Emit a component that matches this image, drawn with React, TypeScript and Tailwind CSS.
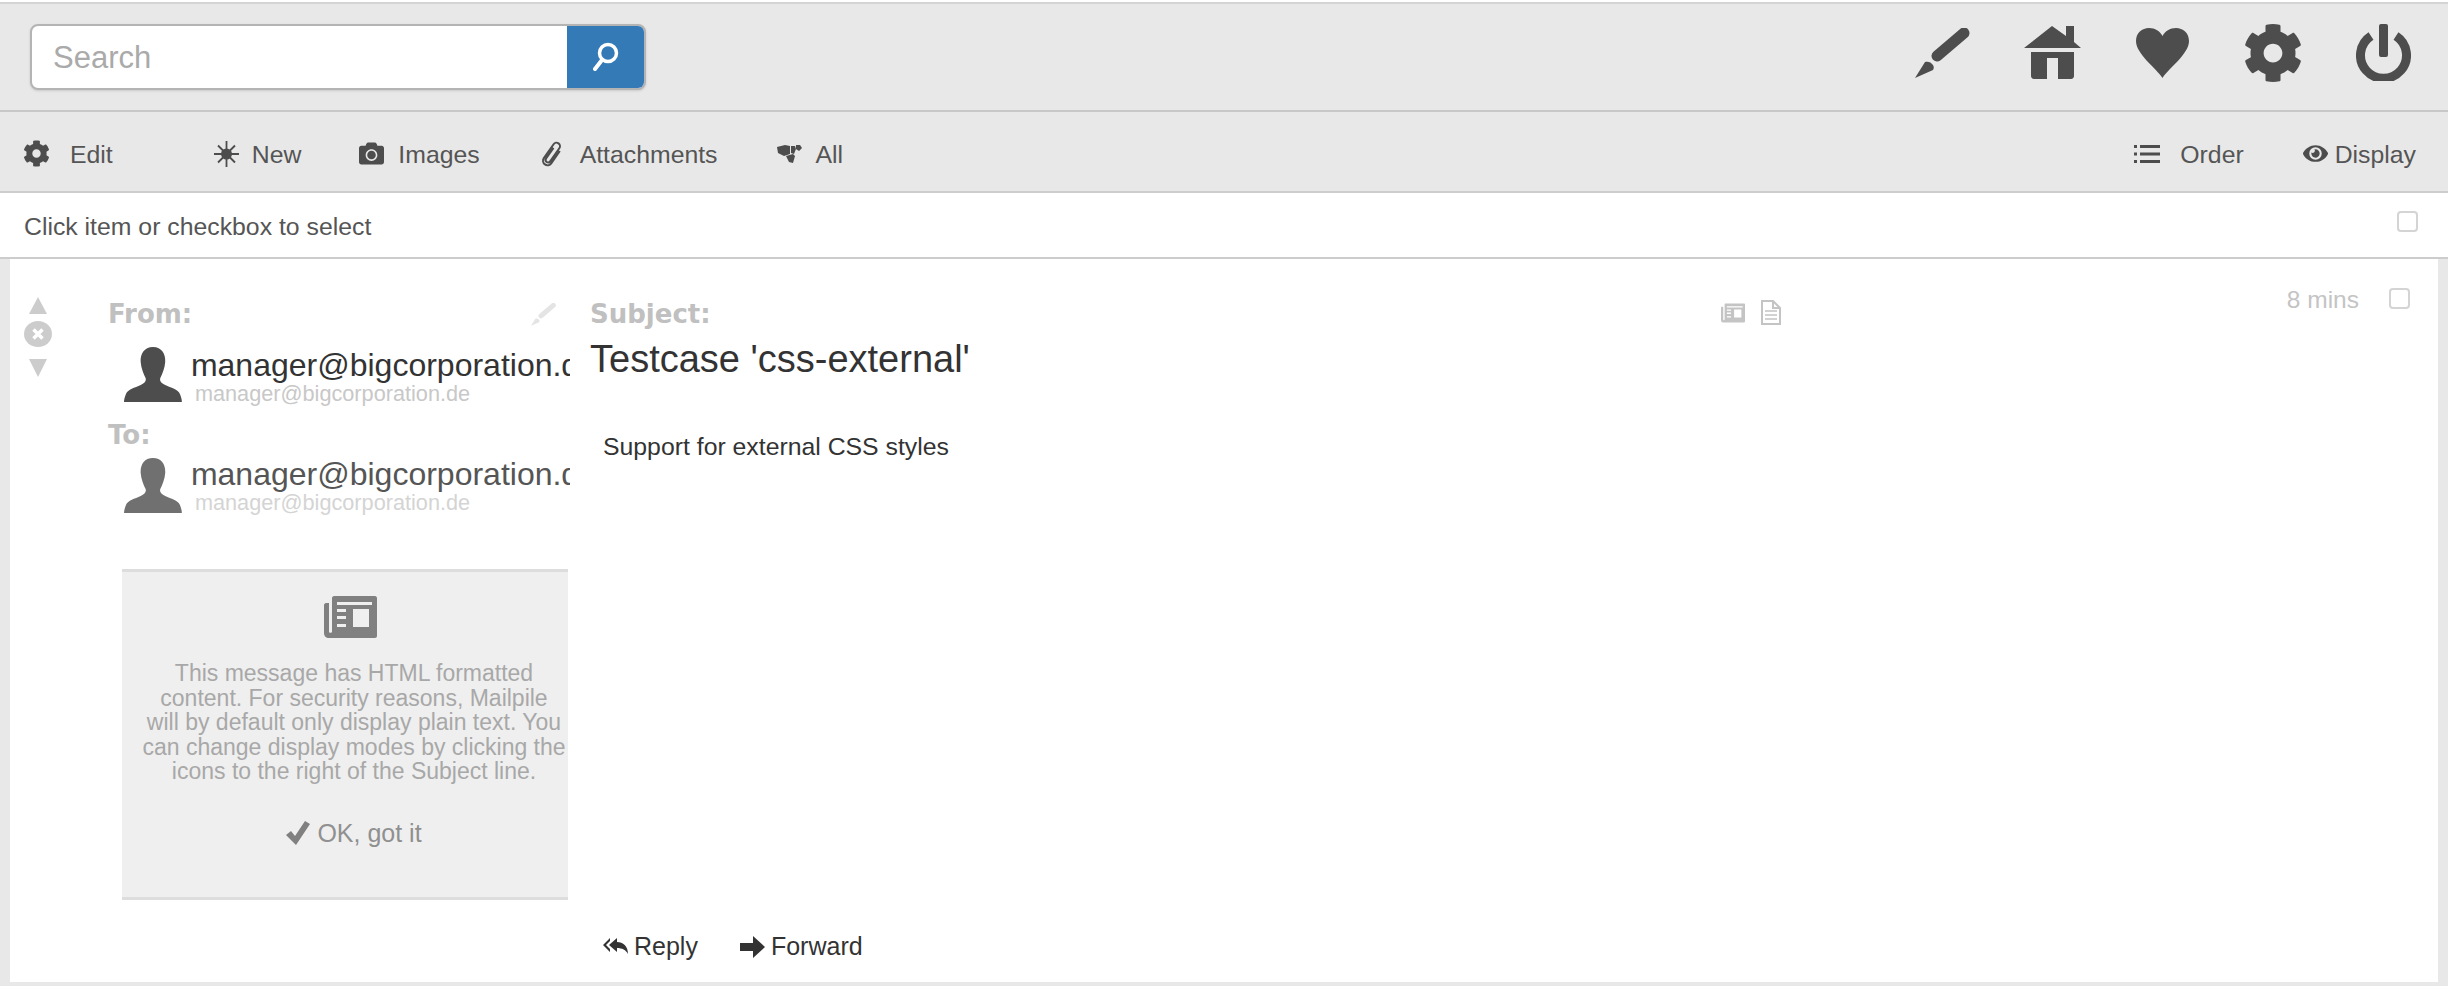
import React from "react";
import { FaCog, FaCamera, FaEye } from "react-icons/fa";

const Pen = ({ c = "#4d4d4d", w = 55, h = 50 }: { c?: string; w?: number; h?: number }) => (
  <svg width={w} height={h} viewBox="0 0 55 50">
    <path fill="none" stroke={c} strokeWidth="11" strokeLinecap="round" d="M49 5 22 28" />
    <path fill={c} d="M10 34c3-1 6 0 8 3 1 2 1 3 0 5L0 50z" />
  </svg>
);
const House = () => (
  <svg width="57" height="53" viewBox="0 0 57 53">
    <path fill="#4d4d4d" d="M28 0 42 10V0h8v16l7 6H0z" />
    <path fill="#4d4d4d" d="M7 26h43v24c0 1-1 3-3 3H34V32H23v21H10c-2 0-3-2-3-3z" />
  </svg>
);
const Heart = () => (
  <svg width="53" height="50" viewBox="0 0 53 50">
    <path fill="#4d4d4d" d="M26.500 50C20 40 0 26 0 13 0 5 6 0 13 0c6 0 11 3 13.500 8C29 3 34 0 40 0c7 0 13 5 13 13 0 13-20 27-26.500 37z" />
  </svg>
);
const Power = () => (
  <svg width="55" height="57" viewBox="0 0 55 57">
    <path fill="none" stroke="#4d4d4d" strokeWidth="9" d="M15 12a23 23 0 1 0 25 0" />
    <rect x="23" y="0" width="9" height="33" rx="2" fill="#4d4d4d" />
  </svg>
);
const Star = () => (
  <svg width="25" height="26" viewBox="0 0 25 26">
    <path stroke="#4d4d4d" strokeWidth="1.800" d="M12.500 0v26M0 13h25M4 4.500l17 17M21 4.500 4 21.500" />
    <circle cx="12.500" cy="13" r="5.500" fill="#4d4d4d" />
  </svg>
);
const Clip = () => (
  <svg width="22" height="27" viewBox="0 0 22 27">
    <g transform="rotate(35 11 13.500)">
      <path fill="none" stroke="#4d4d4d" strokeWidth="2" d="M9 8v13a2.500 2.500 0 0 0 5 0V5a3.500 3.500 0 0 0-7 0v17a4.500 4.500 0 0 0 9 0V7" />
    </g>
  </svg>
);
const Pile = () => (
  <svg width="25" height="19" viewBox="0 0 25 19">
    <path fill="#4d4d4d" d="M0 3l8-2 5 1v8l-6 2-6-3zM14 2h4l1 3-2 5-3-1zM19 1h4l2 3-3 3-3-2zM9 12l7-2 2 2-2 7-4-1z" />
  </svg>
);
const ListIcon = () => (
  <svg width="26" height="20" viewBox="0 0 26 20">
    <path fill="#4d4d4d" d="M0 1h3v3H0zM6 1h20v3H6zM0 8.500h3v3H0zM6 8.500h20v3H6zM0 16h3v3H0zM6 16h20v3H6z" />
  </svg>
);
const Avatar = ({ c }: { c: string }) => (
  <svg width="62" height="55" viewBox="0 0 59 55" preserveAspectRatio="none">
    <path fill={c} d="M29.500 0c9 0 13 7 12.500 15-.4 6-3 12-5 16-1 3 1 5 5 7 6 3 13 4 15 9 1 3 2 5 2 8H0c0-3 1-5 2-8 2-5 9-6 15-9 4-2 6-4 5-7-2-4-4.600-10-5-16C16.500 7 20.500 0 29.500 0z" />
  </svg>
);
const News = ({ c, w, h, inner }: { c: string; w: number; h: number; inner: string }) => (
  <svg width={w} height={h} viewBox="0 0 53 42">
    <path fill={c} d="M8 2c0-1 1-2 2-2h41c1 0 2 1 2 2v38c0 1-1 2-2 2H5c-3 0-5-2-5-5V9c0-1 1-2 2-2h3v29c0 1 3 1 3 0z" />
    <path fill={inner} d="M13 6h35v3H13zM13 13h9v3h-9zM13 20h9v3h-9zM13 28h9v3h-9zM29 13h16v18H29z" />
  </svg>
);
const Doc = () => (
  <svg width="21" height="25" viewBox="0 0 21 25">
    <path fill="none" stroke="#c4c4c4" strokeWidth="2" d="M2 1h11l7 7v16H2zM13 1v7h7" />
    <path stroke="#c4c4c4" strokeWidth="1.500" d="M5 11h12M5 15h12M5 19h12" />
  </svg>
);
const ReplyAll = () => (
  <svg width="25" height="20" viewBox="0 0 25 20">
    <path fill="#333" d="M7 1v3L3 8l4 4v3L0 8z" />
    <path fill="#333" d="M14 1v4c6 0 11 4 11 12-2-4-6-6-11-6v4L6 8z" />
  </svg>
);
const ForwardArrow = () => (
  <svg width="25" height="22" viewBox="0 0 25 22">
    <path fill="#333" d="M0 7h13V0l12 11-12 11v-7H0z" />
  </svg>
);
const Check = () => (
  <svg width="24" height="24" viewBox="0 0 24 24">
    <path fill="#808080" d="M0 14l5-4 4 5L19 0l5 3L10 24z" />
  </svg>
);

const Tool = ({ icon, label, ml, gap }: { icon: React.ReactNode; label: string; ml: string; gap: string }) => (
  <div className={`flex items-center ${ml} ${gap}`}>
    {icon}
    <span className="pt-[2px]">{label}</span>
  </div>
);

const Checkbox = () => (
  <span className="block h-[21px] w-[21px] rounded-[4px] border-2 border-[#d4d4d4] bg-white" />
);

const Person = ({ c, nameColor, subColor, textShift }: { c: string; nameColor: string; subColor: string; textShift: string }) => (
  <div className="ml-[16px] flex h-[62px] w-[446px] items-start overflow-hidden">
    <Avatar c={c} />
    <div className={`ml-[9px] min-w-0 whitespace-nowrap ${textShift}`}>
      <div className={`text-[32px] leading-[36px] ${nameColor}`}>manager@bigcorporation.de</div>
      <div className={`ml-[4px] mt-[-1px] text-[21.700px] leading-[24px] ${subColor}`}>manager@bigcorporation.de</div>
    </div>
  </div>
);

export default function App() {
  return (
    <div className="flex h-[986px] w-full flex-col overflow-hidden bg-[#e8e8e8] font-['Liberation_Sans',Arial,sans-serif] text-[#4d4d4d]">
      <div className="h-[2px] bg-white" />
      <header className="flex h-[110px] items-center justify-between border-y-2 border-y-[#c8c8c8] border-t-[#d4d4d4] pl-[30px] pr-[37px]">
        <div className="flex h-[66px] w-[616px] overflow-hidden rounded-[8px] border-2 border-[#b4b4b4] bg-white shadow-sm">
          <div className="flex flex-1 items-center pl-[21px] pt-[2px] text-[31px] text-[#aaaaaa]">Search</div>
          <div className="flex w-[77px] items-center justify-center bg-[#337ab7]">
            <svg width="26" height="30" viewBox="0 0 26 30">
              <circle cx="15" cy="11" r="8.500" fill="none" stroke="#fff" strokeWidth="3.500" />
              <path d="M9 18 2 27" stroke="#fff" strokeWidth="4" strokeLinecap="round" />
            </svg>
          </div>
        </div>
        <div className="mb-[9px] flex items-center">
          <Pen />
          <div className="ml-[54px]"><House /></div>
          <div className="ml-[55px]"><Heart /></div>
          <div className="ml-[54px]"><FaCog size={60} color="#4d4d4d" /></div>
          <div className="ml-[53px]"><Power /></div>
        </div>
      </header>
      <nav className="flex h-[81px] items-center justify-between border-b-2 border-b-[#cccccc] pl-[23px] pr-[32px] pt-[4px] text-[24.800px] text-[#555555]">
        <div className="flex items-center">
          <Tool ml="ml-0" gap="gap-[20px]" icon={<FaCog size={27} color="#4d4d4d" />} label="Edit" />
          <Tool ml="ml-[101px]" gap="gap-[13px]" icon={<Star />} label="New" />
          <Tool ml="ml-[58px]" gap="gap-[14px]" icon={<FaCamera size={25} color="#4d4d4d" />} label="Images" />
          <Tool ml="ml-[61px]" gap="gap-[17px]" icon={<Clip />} label="Attachments" />
          <Tool ml="ml-[59px]" gap="gap-[14px]" icon={<Pile />} label="All" />
        </div>
        <div className="flex items-center">
          <Tool ml="ml-0" gap="gap-[20px]" icon={<ListIcon />} label="Order" />
          <Tool ml="ml-[59px]" gap="gap-[7px]" icon={<FaEye size={25} color="#4d4d4d" />} label="Display" />
        </div>
      </nav>
      <div className="flex h-[66px] items-center justify-between border-b-2 border-b-[#cccccc] bg-white pl-[24px] pr-[30px] pt-[4px] text-[24.800px] text-[#555555]">
        <span>Click item or checkbox to select</span>
        <span className="mb-[12px]"><Checkbox /></span>
      </div>
      <main className="mx-[10px] flex h-[723px] bg-white">
        <div className="flex w-[98px] flex-col items-center pl-[10px] pr-[52px] pt-[38px]">
          <svg className="shrink-0" width="18" height="17" viewBox="0 0 18 17"><path fill="#cccccc" d="M9 0l9 17H0z" /></svg>
          <svg className="mt-[7px] shrink-0" width="28" height="26" viewBox="0 0 28 26">
            <ellipse cx="14" cy="13" rx="14" ry="13" fill="#cccccc" />
            <path d="M9.500 8.500l9 9M18.500 8.500l-9 9" stroke="#fff" strokeWidth="3.500" />
          </svg>
          <svg className="mt-[12px] shrink-0" width="18" height="18" viewBox="0 0 18 18"><path fill="#cccccc" d="M9 18 18 0H0z" /></svg>
        </div>
        <div className="w-[482px]">
          <div className="mt-[40px] flex h-[30px] w-[448px] items-center justify-between">
            <span className="font-['DejaVu_Sans',sans-serif] text-[26px] font-bold leading-[30px] text-[#c0c0c0]">From:</span>
            <Pen c="#e4e4e4" w={25} h={23} />
          </div>
          <div className="mt-[18px]"><Person c="#4d4d4d" nameColor="text-[#333333]" subColor="text-[#c8c8c8]" textShift="mt-0" /></div>
          <div className="mt-[11px] font-['DejaVu_Sans',sans-serif] text-[26px] font-bold leading-[30px] text-[#c0c0c0]">To:</div>
          <div className="mt-[8px]"><Person c="#707070" nameColor="text-[#555555]" subColor="text-[#d4d4d4]" textShift="mt-[-2px]" /></div>
          <div className="ml-[14px] mt-[49px] flex h-[331px] w-[446px] flex-col items-center border-y-[3px] border-y-[#dddddd] bg-[#efefef] pl-[18px]">
            <div className="mr-[8px] mt-[24px]"><News c="#808080" w={53} h={42} inner="#efefef" /></div>
            <p className="mt-[23px] whitespace-nowrap text-center text-[23px] leading-[24.500px] text-[#a8a8a8]">
              This message has HTML formatted<br />
              content. For security reasons, Mailpile<br />
              will by default only display plain text. You<br />
              can change display modes by clicking the<br />
              icons to the right of the Subject line.
            </p>
            <div className="mt-[31px] flex items-center gap-[7px] text-[25px] text-[#909090]">
              <Check />
              <span>OK, got it</span>
            </div>
          </div>
        </div>
        <div className="flex w-[1191px] flex-col">
          <div className="mt-[39px] flex h-[32px] items-center justify-between">
            <span className="font-['DejaVu_Sans',sans-serif] text-[26px] font-bold text-[#c0c0c0]">Subject:</span>
            <div className="mb-[3px] flex items-center gap-[15px]">
              <News c="#c4c4c4" w={24} h={20} inner="#ffffff" />
              <Doc />
            </div>
          </div>
          <h1 className="mt-[7px] text-[38px] leading-[44px] text-[#333333]">Testcase 'css-external'</h1>
          <p className="ml-[13px] mt-[51px] text-[24.800px] leading-[30px] text-[#333333]">Support for external CSS styles</p>
          <div className="ml-[13px] mt-[466px] flex items-center text-[25px] text-[#333333]">
            <ReplyAll />
            <span className="ml-[6px]">Reply</span>
            <span className="ml-[42px]"><ForwardArrow /></span>
            <span className="ml-[6px]">Forward</span>
          </div>
        </div>
        <div className="flex flex-1 items-start justify-end pr-[28px] pt-[29px]">
          <span className="text-[24.500px] leading-[24px] text-[#c4c4c4]">8 mins</span>
          <span className="ml-[30px]"><Checkbox /></span>
        </div>
      </main>
    </div>
  );
}
